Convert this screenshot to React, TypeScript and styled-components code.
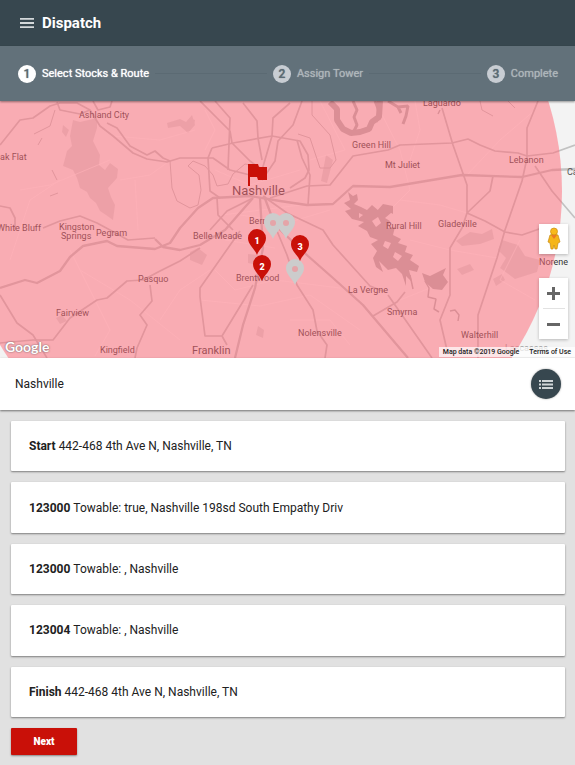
import React from "react";
import styled, { createGlobalStyle } from "styled-components";

const GlobalStyle = createGlobalStyle`
  *, *::before, *::after { box-sizing: border-box; }
  body {
    margin: 0;
    background: #e1e1e1;
    color: #212121;
    font-family: Roboto, "Liberation Sans", sans-serif;
    font-size: 12px;
    line-height: 16px;
  }
  button { font-family: inherit; cursor: pointer; }
`;

const Page = styled.div`
  display: flex;
  flex-direction: column;
  min-height: 100vh;
`;

const Header = styled.header`
  display: flex;
  align-items: center;
  gap: 8px;
  height: 46px;
  padding: 0 20px;
  background: #37474f;
`;

const MenuButton = styled.button`
  display: flex;
  padding: 0;
  border: 0;
  background: none;
  color: #d3d8da;
`;

const Title = styled.h1`
  margin: 0;
  color: #fff;
  font-size: 15px;
  line-height: 20px;
  font-weight: 700;
`;

const Stepper = styled.ol`
  position: relative;
  z-index: 1;
  display: flex;
  align-items: center;
  gap: 6px;
  height: 55px;
  margin: 0;
  padding: 0 17px 0 18px;
  list-style: none;
  background: #62717a;
  box-shadow: 0 1px 2px rgba(0, 0, 0, 0.4);
`;

const Step = styled.li<{ $active?: boolean }>`
  display: flex;
  align-items: center;
  gap: 6px;
  color: ${(p) => (p.$active ? "#fff" : "#aeb6ba")};
  font-size: 11px;
  text-shadow: 0 0 1px currentColor;
  white-space: nowrap;
`;

const StepNumber = styled.span<{ $active?: boolean }>`
  display: grid;
  place-items: center;
  width: 18px;
  height: 18px;
  border-radius: 50%;
  background: ${(p) => (p.$active ? "#fff" : "#c8cdd3")};
  color: #5b6a73;
  font-size: 12px;
  font-weight: 500;
`;

const StepLine = styled.li`
  flex: 1;
  height: 1px;
  background: #5b6a73;
`;

const MapArea = styled.section`
  position: relative;
  height: 257px;
  overflow: hidden;
  background: #f3f3f3;
`;

const MapDrawing = styled.svg`
  display: block;
  width: 100%;
  height: 100%;
  text {
    font-family: Roboto, "Liberation Sans", sans-serif;
    font-size: 9px;
  }
`;

const PlaceName = styled.text<{ $size?: number }>`
  && { font-size: ${(p) => p.$size ?? 9}px; }
`;

const MapControls = styled.div`
  position: absolute;
  right: 7px;
  bottom: 19px;
  display: flex;
  flex-direction: column;
  gap: 24px;
`;

const ControlGroup = styled.div`
  display: flex;
  flex-direction: column;
  align-items: center;
  width: 29px;
  background: #fff;
  box-shadow: 0 1px 3px rgba(0, 0, 0, 0.25);
`;

const ControlButton = styled.button`
  display: grid;
  place-items: center;
  width: 29px;
  height: 30px;
  padding: 0;
  border: 0;
  background: none;
`;

const Divider = styled.div`
  width: 22px;
  height: 1px;
  background: #e2e2e2;
`;

const GoogleMark = styled.span`
  position: absolute;
  left: 5px;
  bottom: 1px;
  color: #fff;
  font-family: Lato, sans-serif;
  font-size: 14px;
  line-height: 20px;
  font-weight: 700;
  text-shadow: 0 0 1px #8d6c70, 0 0 2px #8d6c70;
`;

const Attribution = styled.div`
  position: absolute;
  right: 0;
  bottom: 1px;
  display: flex;
  gap: 10px;
  padding: 0 4px;
  background: rgba(255, 255, 255, 0.7);
  color: #222;
  font-size: 7px;
  line-height: 10px;
  font-weight: 500;
  a { color: inherit; text-decoration: none; }
`;

const LocationBar = styled.div`
  position: relative;
  display: flex;
  align-items: center;
  justify-content: space-between;
  height: 52px;
  padding: 0 14px 0 15px;
  background: #fff;
  box-shadow: 0 1px 2px rgba(0, 0, 0, 0.5);
`;

const ListButton = styled.button`
  display: grid;
  place-items: center;
  width: 30px;
  height: 30px;
  padding: 0;
  border: 0;
  border-radius: 50%;
  background: #37474f;
  box-shadow: 0 0 2px rgba(0, 0, 0, 0.4);
`;

const Content = styled.main`
  flex: 1;
  display: flex;
  flex-direction: column;
  align-items: flex-start;
  gap: 11px;
  padding: 11px 10px 10px 11px;
`;

const StopList = styled.ul`
  flex: 1;
  align-self: stretch;
  display: flex;
  flex-direction: column;
  gap: 11px;
  margin: 0;
  padding: 0;
  list-style: none;
`;

const StopCard = styled.li`
  flex: 1;
  display: flex;
  align-items: center;
  gap: 3px;
  min-height: 48px;
  padding: 0 18px;
  border-radius: 1px;
  background: #fff;
  box-shadow: 0 1px 2px rgba(0, 0, 0, 0.45);
`;

const NextButton = styled.button`
  width: 66px;
  height: 27px;
  padding: 0;
  border: 0;
  border-radius: 1px;
  background: #c91008;
  box-shadow: 0 1px 2px rgba(0, 0, 0, 0.4);
  color: #fff;
  font-size: 10px;
  font-weight: 900;
`;

const minorRoads = [
  "M10 260L30 200L60 180M70 250L90 290L110 330L95 356M20 190L50 185L110 160M120 180L150 175L168 162M113 136L160 140L195 130M135 180L138 230",
  "M80 270L130 300L180 340M160 320L180 290L210 270M200 300L260 306L310 295L360 330M215 270L235 290L275 280L340 288M290 320L330 320L350 345",
  "M320 101L345 150L310 160M375 101L400 150L410 190L370 230M400 200L440 205L467 213M410 160L420 130L415 101M467 175L500 140L535 110M410 240L450 250L497 258M520 240L500 280L535 300M400 300L450 280",
  "M205 110L215 130L205 150M215 170L250 185L300 170M240 215L290 222L330 210M225 240L275 248M222 215L300 205",
];

const roads = [
  "M0 145L20 120L33 118L50 106L60 103L77 103L90 110L100 126L113 136L133 153L147 159L167 162L180 158L213 158L230 170L250 175",
  "M107 123L117 128L130 146L147 155L155 151L163 158L170 161",
  "M93 101L98 110L110 107L112 101M57 102L60 110L80 114L90 110",
  "M0 206L10 208L15 218L15 230M43 228L60 221L80 216L97 223L110 230L128 240L155 238",
  "M212 148L233 143L272 136L300 141L308 155L309 170L305 178L290 188M212 148L208 158L210 191L220 198",
  "M200 101L230 131L232 143L250 161L262 170M215 101L230 118L228 170",
  "M243 103L257 121L258 138L262 160M290 103L273 118L272 136L262 170M302 101L293 125L278 141L275 161L262 180",
  "M297 140L302 158L310 175L308 205",
  "M270 198L307 186L330 185L353 156L388 150L400 145L452 143L468 139L480 145L495 151L518 153L527 156L553 153L575 145",
  "M253 198L227 211L210 230M217 198L218 215L233 230M263 196L287 213L323 230L333 245L370 286L385 292",
  "M240 231L200 288L200 297L205 336L222 336L227 345M253 285L233 318L222 336",
  "M277 231L287 255L297 285L313 310L317 331L327 345L325 358",
  "M373 316L397 302L405 292M388 295L432 358",
  "M442 108L453 145L467 185L467 213L485 221L505 232L522 235L542 228M493 176L490 191L467 213L462 228L450 248L450 295L440 320L447 350",
  "M538 101L527 128L527 158L522 181L505 230L497 258L478 315L478 358M535 166L552 191L575 218",
  "M0 343L33 340L53 340L70 318L97 300L107 298L127 281L143 280L160 271L180 261L200 248",
  "M0 295L17 323L33 335L47 358M150 285L152 301L140 315L147 325L137 348L135 358",
];

const highways = [
  "M0 288L25 280L37 283L60 271L70 257L83 246L107 241L117 246L155 249L170 243L180 228L198 208L213 198L250 196L280 201L307 205L333 204L353 186L390 187L462 175L522 177L552 170L575 169",
  "M155 239L163 247L180 250L200 245L225 230L253 198",
  "M260 198L263 248L255 288L243 325L235 358",
  "M264 196L275 225L308 256L333 278L363 305L408 358",
];

const rivers = [
  "M170 161L172 188L177 201L190 208L198 205L201 190L199 175L188 166M188 166L193 161L205 166L213 175L217 186L228 184L233 174L245 164L260 167",
  "M312 101L312 115L330 135L336 160L330 168L320 168L310 138L298 134",
  "M480 101L482 110L493 116M508 101L515 108",
  "M34 134L50 126L55 110M38 145L42 138M52 170L57 180M50 196L58 193",
];

const labels: [string, number, number, number?][] = [
  ["Ashland City", 79, 118],
  ["Laguardo", 423, 106],
  ["Green Hill", 352, 148],
  ["Mt Juliet", 385, 168],
  ["Lebanon", 509, 163],
  ["ak Flat", 0, 160],
  ["White Bluff", -3, 231],
  ["Kingston", 59, 230],
  ["Springs", 61, 239],
  ["Pegram", 96, 236],
  ["Belle Meade", 193, 239],
  ["Berry Hill", 249, 224],
  ["Rural Hill", 386, 229],
  ["Gladeville", 438, 227],
  ["Pasquo", 138, 282],
  ["Brentwood", 236, 281],
  ["La Vergne", 348, 293],
  ["Fairview", 56, 316],
  ["Smyrna", 387, 315],
  ["Nolensville", 298, 336],
  ["Walterhill", 461, 338],
  ["Kingfield", 100, 353],
  ["Franklin", 192, 354, 11],
  ["Norene", 539, 265],
  ["Nashville", 232, 195, 13],
];

const stops = [
  { name: "Start", detail: "442-468 4th Ave N, Nashville, TN" },
  { name: "123000", detail: "Towable: true, Nashville 198sd South Empathy Driv" },
  { name: "123000", detail: "Towable: , Nashville" },
  { name: "123004", detail: "Towable: , Nashville" },
  { name: "Finish", detail: "442-468 4th Ave N, Nashville, TN" },
];

const PIN = "M0 0C-2 -6 -9 -10 -9 -17A9 9 0 0 1 9 -17C9 -10 2 -6 0 0Z";

function Pin({ x, y, label }: { x: number; y: number; label?: string }) {
  return (
    <g transform={`translate(${x} ${y})`}>
      <path d={PIN} fill={label ? "#c91008" : "#cccccc"} />
      {label ? (
        <text y={-11} textAnchor="middle" fill="#fff" fontWeight={900}>{label}</text>
      ) : (
        <circle cy={-16} r={3} fill="#e5a4a8" />
      )}
    </g>
  );
}

function RouteMap() {
  return (
    <MapDrawing viewBox="0 101 575 257" preserveAspectRatio="xMidYMid slice" role="img" aria-label="Map of Nashville">
      <rect y="101" width="575" height="257" fill="#f3f3f3" />
      <g fill="#dadada">
        <path d="M73 120L80 122L97 118L97 128L93 141L100 155L99 165L105 170L110 163L118 169L117 178L108 188L111 197L115 205L113 220L106 215L100 211L96 203L90 198L87 192L80 188L77 178L73 170L63 166L67 151L72 146L70 136Z" />
        <path d="M63 125L69 130L66 137L62 132ZM167 123L180 119L186 122L192 115L195 125L188 133L180 126L168 128Z" />
        <path d="M190 252L198 248L207 255L202 265L190 260ZM248 254L258 255L257 265L248 263ZM258 326L264 330L263 338L256 335ZM326 155L333 160L327 183L321 181Z" />
        <path d="M456 241L470 232L482 234L492 229L494 239L480 244L462 246ZM502 240L518 245L525 256L540 260L537 272L515 279L500 268L506 258L498 250ZM457 269L470 264L474 270L462 275ZM56 318L62 315L67 321L60 324ZM493 279L502 274L505 280L496 286ZM190 118L195 120L194 126L190 125Z" />
      </g>
      <g fill="none" stroke="#fff" strokeWidth="1" opacity="0.6">
        {minorRoads.map((d) => <path key={d} d={d} />)}
      </g>
      <g fill="none" stroke="#c2c2c2" strokeLinejoin="round">
        <g strokeWidth="1">{rivers.map((d) => <path key={d} d={d} />)}</g>
        <g strokeWidth="1.7">{roads.map((d) => <path key={d} d={d} />)}</g>
        <g strokeWidth="2.3">{highways.map((d) => <path key={d} d={d} />)}</g>
      </g>
      <g fill="none" stroke="#b5b5b5" strokeLinejoin="bevel">
        <path strokeWidth="6" d="M330 102L337 109L337 120L343 129L351 133L360 132L369 129L372 122L379 117L380 101" />
        <path strokeWidth="3" d="M353 101L357 110L354 117L357 125L354 131M388 101L398 107L408 106L406 116L403 124M375 101L379 111L376 122M398 107L401 113" />
        <path strokeWidth="1.5" d="M425 281L429 288L428 297L436 299L434 309L439 312M450 311L455 310L459 315L458 321M440 110L438 114M410 275L413 289" />
      </g>
      <path
        fill="#b5b5b5"
        d="M348 192L353 196L357 194L358 200L354 204L361 207L367 210L372 205L379 211L386 206L391 213L385 218L390 221L388 228L395 227L393 235L401 239L398 243L407 246L405 252L413 255L410 260L419 266L417 272L409 270L412 282L406 276L406 286L402 274L396 268L388 270L379 261L383 272L376 267L373 258L377 251L371 244L378 240L370 237L367 231L358 226L364 222L352 219L345 211L351 209L344 203L350 200ZM422 273L430 276L438 272L446 268L443 275L448 282L442 290L433 289L425 282ZM376 212L383 204L393 206L393 214L386 210L383 219L376 221Z"
      />
      <path fill="#f3f3f3" d="M372 221L378 217L381 223L376 227ZM385 241L391 243L388 249L383 246ZM395 252L402 256L398 261L393 257ZM359 213L363 215L359 218Z" />
      <g fill="#333">
        {labels.map(([name, x, y, size]) => (
          <PlaceName key={name} x={x} y={y} $size={size}>{name}</PlaceName>
        ))}
        <text x="567" y="175" fill="#555">Carthage</text>
        <text x="505" y="351" fill="#999">Lascassas</text>
      </g>
      <circle cx="260" cy="191" r="302" fill="#ff6b78" fillOpacity="0.52" />
      <path d="M248 186V164H258L259 167H267V180H258L257 177H250V186Z" fill="#c91008" />
      <Pin x={273} y={239} />
      <Pin x={286} y={239} />
      <Pin x={295} y={285} />
      <Pin x={257} y={255} label="1" />
      <Pin x={262} y={281} label="2" />
      <Pin x={300} y={261} label="3" />
    </MapDrawing>
  );
}

function Pegman() {
  return (
    <svg width="14" height="24" viewBox="0 0 14 24" aria-hidden="true">
      <path d="M3 8Q7 6 11 8L13 15L11 16L10 22H8L7 18L6 22H4L3 16L1 15Z" fill="#f5b517" stroke="#c98b13" strokeWidth="0.7" />
      <circle cx="7" cy="4.5" r="3.5" fill="#f9b91a" stroke="#c98b13" strokeWidth="0.7" />
      <path d="M4 8L7 12L10 8Z" fill="#ec7a24" />
    </svg>
  );
}

export default function App() {
  return (
    <Page>
      <GlobalStyle />
      <Header>
        <MenuButton aria-label="Menu">
          <svg width="14" height="10" viewBox="0 0 14 10" fill="currentColor" aria-hidden="true">
            <path d="M0 0H14V1.8H0ZM0 4.1H14V5.9H0ZM0 8.2H14V10H0Z" />
          </svg>
        </MenuButton>
        <Title>Dispatch</Title>
      </Header>
      <Stepper>
        <Step $active aria-current="step"><StepNumber $active>1</StepNumber>Select Stocks &amp; Route</Step>
        <StepLine aria-hidden="true" />
        <Step><StepNumber>2</StepNumber>Assign Tower</Step>
        <StepLine aria-hidden="true" />
        <Step><StepNumber>3</StepNumber>Complete</Step>
      </Stepper>
      <MapArea>
        <RouteMap />
        <GoogleMark>Google</GoogleMark>
        <MapControls>
          <ControlGroup>
            <ControlButton aria-label="Street View"><Pegman /></ControlButton>
          </ControlGroup>
          <ControlGroup>
            <ControlButton aria-label="Zoom in">
              <svg width="13" height="13" viewBox="0 0 13 13" aria-hidden="true"><path d="M5 0H8V5H13V8H8V13H5V8H0V5H5Z" fill="#666" /></svg>
            </ControlButton>
            <Divider />
            <ControlButton aria-label="Zoom out">
              <svg width="13" height="3" viewBox="0 0 13 3" aria-hidden="true"><path d="M0 0H13V3H0Z" fill="#666" /></svg>
            </ControlButton>
          </ControlGroup>
        </MapControls>
        <Attribution>
          <span>Map data ©2019 Google</span>
          <a href="#terms">Terms of Use</a>
        </Attribution>
      </MapArea>
      <LocationBar>
        <span>Nashville</span>
        <ListButton aria-label="Show list">
          <svg width="14" height="9" viewBox="0 0 14 9" fill="#cfd5d8" aria-hidden="true">
            <path d="M0 0H2V2H0ZM3 0H14V2H3ZM0 3.5H2V5.5H0ZM3 3.5H14V5.5H3ZM0 7H2V9H0ZM3 7H14V9H3Z" />
          </svg>
        </ListButton>
      </LocationBar>
      <Content>
        <StopList>
          {stops.map((stop, i) => (
            <StopCard key={i}>
              <strong>{stop.name}</strong>
              <span>{stop.detail}</span>
            </StopCard>
          ))}
        </StopList>
        <NextButton type="button">Next</NextButton>
      </Content>
    </Page>
  );
}
